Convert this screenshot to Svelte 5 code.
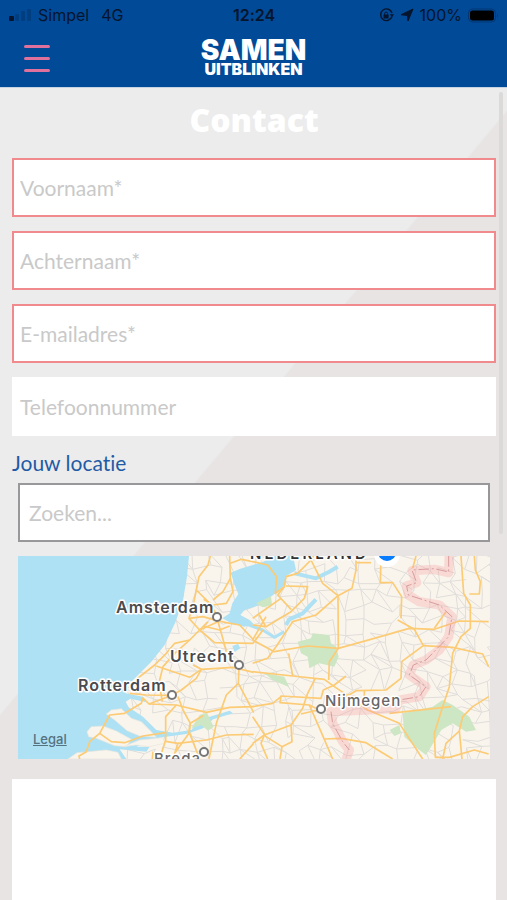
<script lang="ts">
	const fields = [
		{ id: 'firstname', placeholder: 'Voornaam*', type: 'text', required: true },
		{ id: 'lastname', placeholder: 'Achternaam*', type: 'text', required: true },
		{ id: 'email', placeholder: 'E-mailadres*', type: 'email', required: true },
		{ id: 'phone', placeholder: 'Telefoonnummer', type: 'tel', required: false }
	];

	const cities = [
		{ name: 'Amsterdam', x: 98, y: 57, cx: 199, cy: 61 },
		{ name: 'Utrecht', x: 152, y: 106, cx: 221, cy: 109 },
		{ name: 'Rotterdam', x: 60, y: 135, cx: 154, cy: 139 },
		{ name: 'Nijmegen', x: 307, y: 150, cx: 303, cy: 153, minor: true },
		{ name: 'Breda', x: 136, y: 208, cx: 186, cy: 196, minor: true }
	];

	// map geometry lives on a grid three times finer than the labels
	const roadsWest = [
		'M632,18 L625,45 L598,80 L590,120 L625,155 L652,195',
		'M590,120 L580,170 L568,205 L600,240 L655,215',
		'M690,18 L692,85 L700,125 L680,160 L640,165 L612,148',
		'M692,85 L670,125 L640,150',
		'M692,40 L725,28 L760,35',
		'M568,205 L610,200 L652,212 L680,218 L720,225 L762,270',
		'M600,240 L570,270 L525,310 L490,350 L480,390 L492,410',
		'M600,240 L645,278 L760,280 L790,240',
		'M600,240 L625,215 M610,228 L660,240 L690,228',
		'M655,215 L668,260 L680,305',
		'M570,270 L525,280 L500,310 L465,345 L410,388',
		'M580,345 L605,358 L570,382 L470,348',
		'M605,358 L700,352 L762,367',
		'M605,358 L590,385 L545,420 L517,436 L440,435 L390,430',
		'M718,350 L716,400 L680,435 L650,520 L628,627',
		'M716,400 L740,445 L762,488',
		'M517,436 L448,462 L430,444 L425,460 L375,490 L330,495 L300,550 L270,575 L260,605 L238,618 L240,627',
		'M448,462 L530,465 L620,487 L690,472 L762,470',
		'M535,440 L550,480 L572,520 L568,545 L600,627',
		'M530,465 L498,500 L498,570 L480,627',
		'M480,408 L488,455',
		'M498,548 L430,558 L375,578 L335,575 L300,550',
		'M498,574 L535,580 L525,610 L568,550 L572,520 L610,497',
		'M535,580 L620,570 L680,555 L762,553',
		'M762,580 L720,627',
		'M460,605 L458,627'
	];
	const roadsEast = [
		'M0,35 L45,45 L72,80 L68,130 L95,110 L100,80 L135,70 L175,30 L182,18',
		'M100,108 L165,110 L155,145 L115,185 L40,230 L0,225',
		'M95,110 L75,135 L115,178 M85,145 L0,205 M20,195 L38,228',
		'M175,30 L210,100 L256,137 L257,295',
		'M310,18 L310,60 L298,115 L256,137 L190,195 L120,215 L70,290 L45,325 L0,340',
		'M310,38 L355,38',
		'M385,18 L383,98 L420,98 L447,140 L445,205',
		'M0,270 L65,305 L165,288 L257,295 L330,275 L470,235 L545,238 L620,213 L708,215',
		'M0,270 L40,200',
		'M257,295 L230,335 L228,390',
		'M435,210 L485,238 L512,287 L447,335 L445,385 L400,420 L310,422 L280,440',
		'M512,287 L600,292 L690,312 L708,350',
		'M480,55 L490,18',
		'M625,18 L633,130 L653,165 L653,235 L625,260 L600,310 L590,410 L570,470 L545,550 L548,622 L590,622 L665,600 L708,612',
		'M545,235 L580,185',
		'M665,18 L668,60 L683,95 L680,132 L650,132',
		'M108,310 L120,378',
		'M0,365 L120,378 L215,388 L245,410 L290,440 L345,480 L440,520 L510,627',
		'M280,378 L245,405 L212,420 L205,445 L85,438 L82,458 L170,465 L200,480',
		'M188,385 L165,430 L150,475 L115,525 L35,555 L0,580',
		'M0,470 L60,460 L85,440',
		'M0,500 L40,560 L88,590 L118,575 L115,525',
		'M35,555 L25,580 L45,627 M88,590 L82,627',
		'M170,465 L205,545 L240,627',
		'M145,492 L195,480',
		'M215,567 L265,565 L340,578 L420,627',
		'M410,490 L595,470',
		'M570,627 L580,580 L620,543 L630,500 L660,470 L708,440',
		'M620,543 L628,627',
		'M335,422 L335,438'
	];

	// small local roads: a jittered net laid under the main ones
	const noise = (n: number) => {
		const s = Math.sin(n * 127.1) * 43758.5453;
		return s - Math.floor(s);
	};
	const step = 39;
	const point = (c: number, r: number) => {
		const n = c * 31 + r * 7;
		return `${Math.round(370 + c * step + noise(n) * 32)},${Math.round(r * step + noise(n + 0.5) * 32)}`;
	};
	let net = '';
	for (let r = 0; r < 17; r++) {
		for (let c = 0; c < 30; c++) {
			const n = c * 13 + r * 57;
			if (noise(n + 0.2) > 0.25) net += `M${point(c, r)} L${point(c + 1, r)}`;
			if (noise(n + 0.4) > 0.3) net += `M${point(c, r)} L${point(c, r + 1)}`;
			if (noise(n + 0.7) > 0.7) net += `M${point(c, r)} L${point(c + 1, r + 1)}`;
		}
	}
</script>

<div class="page">
	<header>
		<div class="status">
			<div class="carrier">
				<svg width="23" height="12" viewBox="0 0 23 12">
					<rect x="0" y="7" width="5" height="5" rx="1" />
					<g opacity="0.22">
						<rect x="6" y="5" width="4" height="7" rx="1" />
						<rect x="12" y="2" width="4" height="10" rx="1" />
						<rect x="18" y="0" width="4" height="12" rx="1" />
					</g>
				</svg>
				<span>Simpel</span>
				<span class="network">4G</span>
			</div>
			<span class="clock">12:24</span>
			<div class="battery">
				<svg width="15" height="15" viewBox="0 0 15 15">
					<path d="M13 8.5A5.8 5.8 0 1 1 13 5" fill="none" stroke="#06152d" stroke-width="1.4" />
					<path d="M10.8 6.2h4.2l-2 3z" />
					<rect x="4.6" y="6.6" width="5" height="4" rx="0.6" />
					<path d="M5.6 7V5.6a1.5 1.5 0 0 1 3 0V7" fill="none" stroke="#06152d" />
				</svg>
				<svg width="14" height="14" viewBox="0 0 14 14">
					<path d="M13 1 8 13 7.4 7.4 1 6.8z" stroke="#06152d" stroke-linejoin="round" />
				</svg>
				<span>100%</span>
				<svg width="31" height="15" viewBox="0 0 31 15">
					<rect x="0.5" y="1" width="27" height="13" rx="4" fill="none" stroke="#06152d" opacity="0.35" />
					<rect x="2" y="2.5" width="24" height="10" rx="2.5" fill="#000" />
					<path d="M29 5.5q2 2 0 4z" opacity="0.35" />
				</svg>
			</div>
		</div>
		<nav>
			<button class="menu" aria-label="Menu">
				<span></span>
				<span></span>
				<span></span>
			</button>
			<a class="logo" href="#home">
				<span class="logo-top">SAMEN</span>
				<span class="logo-bottom">UITBLINKEN</span>
			</a>
		</nav>
	</header>

	<main>
		<h1>Contact</h1>
		<form>
			{#each fields as field}
				<input
					class="field"
					class:invalid={field.required}
					id={field.id}
					type={field.type}
					placeholder={field.placeholder}
					aria-label={field.placeholder}
				/>
			{/each}

			<label for="location">Jouw locatie</label>
			<div class="location">
				<input class="field search" id="location" type="text" placeholder="Zoeken..." />

				<div class="map">
					<svg viewBox="0 0 472 203">
						<g transform="scale(0.33333) translate(-55 -18)" fill="none" stroke-linejoin="round">
							<rect x="55" y="18" width="1420" height="612" fill="#f9f5ed" />
							<path d={net} stroke="#e0ddda" stroke-width="3" />

							<g fill="#cde6c4">
								<path d="M894,275L934,265 939,250 989,255 994,280 1009,290 1017,320 1004,350 959,340 929,355 924,320 904,310z" />
								<path d="M794,370L854,380 869,412 819,390z" />
								<path d="M1209,490L1299,470 1329,450 1359,465 1409,500 1429,540 1399,545 1359,520 1325,540 1279,615 1259,600 1214,560z" />
								<path d="M1170,540L1199,525 1204,550 1184,558z" />
							</g>

							<g fill="#aee1f4">
								<path d="M55,18H568L562,80 550,150 528,215 495,285 455,335 410,380 385,405 378,430 430,440 438,456 392,446 378,455 387,472 430,500 470,540 520,548 575,540 600,510 640,497 690,482 700,490 640,508 610,535 560,552 500,560 470,565 410,590 450,590 440,605 360,598 380,627H55z" />
								<path d="M693,68L722,56 790,36 820,18 880,18 889,60 860,78 855,105 830,128 779,165 735,180 722,195 750,210 762,222 735,230 700,222 668,205 690,190 698,160 716,132 706,108z" />
								<path d="M698,288L715,282 722,295 705,306z" />
							</g>
							<g stroke="#aee1f4">
								<path d="M740,222L789,240 824,262 854,245" stroke-width="9" />
								<path d="M859,225L869,208 909,190 949,148" stroke-width="12" />
								<path d="M885,70L949,85 989,65 1014,50" stroke-width="12" />
							</g>
							<g fill="#f9f5ed" stroke="#eae5db" stroke-width="2">
								<path d="M262,545L275,530 310,528 350,543 395,568 380,590 345,587 290,565 267,560z" />
								<path d="M320,492L335,480 365,476 395,505 425,515 455,545 470,562 420,558 382,542 345,510z" />
								<path d="M205,627L232,608 265,605 320,600 355,607 365,627z" />
								<path d="M370,590L420,570 490,563 495,580 450,590 410,585z" />
							</g>
							<path d="M769,160L814,138 817,165 789,172z" fill="#cde6c4" />
							<path d="M600,495L622,488 642,530 625,542 605,525 575,535z" fill="#cde6c4" />

							<g stroke="#fccb74" stroke-width="5">
								{#each roadsWest as road}
									<path d={road} />
								{/each}
								{#each roadsEast as road}
									<path d={road} transform="translate(759 0)" />
								{/each}
							</g>

							<g transform="translate(759 0)">
								<path
									d="M590,10L588,68 545,58 478,62 492,98 462,108 467,135 500,155 560,165 598,200 588,260 560,300 520,330 482,345 470,375 520,410 500,440 440,450 430,475 340,480 235,485 240,520 255,545 270,575 290,600 280,630"
									stroke="#f5a3a5"
									stroke-opacity="0.34"
									stroke-width="28"
								/>
								<path
									d="M588,18 L588,66 L545,56 L478,60 L492,98 L462,108 L467,135 L560,165 L598,200 L588,260 L520,330 L482,345 L470,375 L520,410 L500,440 L440,450 M235,485 L240,520 L270,575 L290,600"
									stroke="#d99c9e"
									stroke-width="3"
									stroke-dasharray="32 8 6 8"
								/>
							</g>
						</g>

						<text class="country" x="232" y="3">NEDERLAND</text>
						<circle cx="369" cy="-2" r="13" fill="#fff" />
						<circle cx="369" cy="-4" r="9" fill="#087cff" />

						{#each cities as city}
							<text class="city" class:minor={city.minor} x={city.x} y={city.y}>{city.name}</text>
							<circle cx={city.cx} cy={city.cy} r="4" fill="#fff" stroke="#777" stroke-width="2" />
						{/each}
					</svg>
					<a class="legal" href="#legal">Legal</a>
				</div>
			</div>

			<textarea aria-label="Bericht"></textarea>
		</form>
		<div class="scrollbar"></div>
	</main>
</div>

<style>
	:global(body) {
		margin: 0;
	}

	.page {
		display: flex;
		flex-direction: column;
		min-height: 100vh;
		font-family: Lato, 'Open Sans', sans-serif;
		font-variant-ligatures: none;
	}

	header {
		background: #004a98;
		border-bottom: 1px solid #c5d3e3;
	}

	.status {
		display: grid;
		grid-template-columns: 1fr auto 1fr;
		align-items: center;
		height: 30px;
		padding: 0 8px 0 9px;
		font-family: Inter, sans-serif;
		font-size: 16px;
		line-height: 20px;
		color: #06152d;
	}

	.status svg {
		fill: #06152d;
	}

	.carrier,
	.battery {
		display: flex;
		align-items: center;
		gap: 6px;
	}

	.battery {
		justify-content: flex-end;
	}

	.network {
		margin-left: 6px;
	}

	.clock {
		font-weight: 600;
	}

	nav {
		display: grid;
		grid-template-columns: 1fr auto 1fr;
		align-items: center;
		height: 57px;
		padding: 0 24px;
	}

	.menu {
		display: flex;
		flex-direction: column;
		gap: 9px;
		width: 26px;
		padding: 0;
		border: 0;
		background: none;
		cursor: pointer;
	}

	.menu span {
		height: 3px;
		border-radius: 2px;
		background: #e0709c;
	}

	.logo {
		display: flex;
		flex-direction: column;
		align-items: center;
		font-family: Inter, sans-serif;
		font-weight: 900;
		color: #fff;
		text-decoration: none;
	}

	.logo-top {
		font-size: 28px;
		line-height: 20px;
	}

	.logo-bottom {
		font-size: 16px;
		line-height: 18px;
	}

	main {
		position: relative;
		display: flex;
		flex: 1;
		flex-direction: column;
		padding: 0 11px 0 12px;
		background: linear-gradient(130deg, #ececec 402px, #e8e4e4 404px);
	}

	h1 {
		margin: 0;
		padding: 12px 0 18px;
		font-family: 'Open Sans', sans-serif;
		font-size: 32px;
		font-weight: 800;
		line-height: 40px;
		text-align: center;
		color: #fff;
	}

	form {
		display: flex;
		flex: 1;
		flex-direction: column;
	}

	.field {
		box-sizing: border-box;
		width: 100%;
		height: 59px;
		margin: 0 0 14px;
		padding: 0 6px;
		border: 2px solid #fff;
		border-radius: 0;
		background: #fff;
		font-family: inherit;
		font-size: 21px;
		color: #333;
	}

	.field::placeholder {
		color: #c9c9c9;
		opacity: 1;
	}

	.field.invalid {
		border-color: #f08a8c;
	}

	.field.search {
		padding: 0 9px;
		border-color: #98979a;
	}

	label {
		margin-bottom: 8px;
		font-size: 21px;
		line-height: 25px;
		color: #1f5ba6;
	}

	.location {
		padding: 0 6px;
	}

	.map {
		position: relative;
		margin-bottom: 20px;
	}

	.map svg {
		display: block;
		width: 100%;
		overflow: hidden;
	}

	.city,
	.country {
		font-family: Inter, sans-serif;
		font-size: 16px;
		font-weight: 600;
		letter-spacing: 1px;
		fill: #4b4b4d;
		stroke: #fff;
		stroke-width: 3px;
		stroke-linejoin: round;
		paint-order: stroke;
	}

	.city.minor {
		font-size: 15px;
		font-weight: 500;
		fill: #666;
	}

	.country {
		font-size: 15px;
		letter-spacing: 3px;
		fill: #333;
	}

	.legal {
		position: absolute;
		bottom: 12px;
		left: 15px;
		font-family: Inter, sans-serif;
		font-size: 13px;
		font-weight: 500;
		line-height: 16px;
		color: #557281;
	}

	textarea {
		box-sizing: border-box;
		flex: 1;
		width: 100%;
		min-height: 120px;
		padding: 8px;
		border: 0;
		border-radius: 0;
		background: #fff;
		font-family: inherit;
		font-size: 21px;
		resize: none;
	}

	.scrollbar {
		position: absolute;
		top: 4px;
		right: 4px;
		width: 4px;
		height: 442px;
		border-radius: 2px;
		background: #dcd9d9;
	}
</style>
